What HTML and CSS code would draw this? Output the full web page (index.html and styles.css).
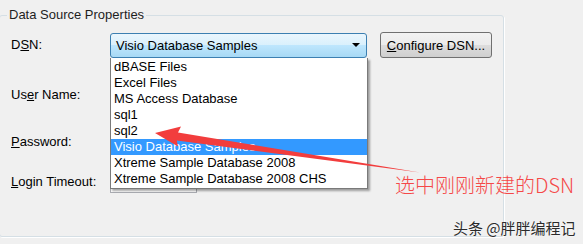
FILE: index.html
```html
<!DOCTYPE html>
<html lang="zh-CN">
<head>
    <meta charset="UTF-8">
    <meta name="viewport" content="width=device-width, initial-scale=1.0">
    <title>Data Source Properties</title>
    <link rel="stylesheet" href="styles.css">
</head>
<body>
    <div class="dialog">
        <fieldset class="group">
            <legend>Data Source Properties</legend>

            <div class="row row-dsn">
                <label class="label">D<u>S</u>N:</label>
                <div class="combo">
                    <span>Visio Database Samples</span>
                    <span class="combo-arrow"></span>
                </div>
                <button class="btn"><u>C</u>onfigure DSN...</button>
            </div>

            <div class="row row-user">
                <label class="label">Us<u>e</u>r Name:</label>
                <div class="textbox"></div>
            </div>

            <div class="row row-pass">
                <label class="label"><u>P</u>assword:</label>
                <div class="textbox"></div>
            </div>

            <div class="row row-timeout">
                <label class="label"><u>L</u>ogin Timeout:</label>
                <div class="textbox textbox-short"></div>
            </div>
        </fieldset>

        <!-- open combo list -->
        <ul class="dropdown">
            <li>dBASE Files</li>
            <li>Excel Files</li>
            <li>MS Access Database</li>
            <li>sql1</li>
            <li>sql2</li>
            <li class="selected">Visio Database Samples</li>
            <li>Xtreme Sample Database 2008</li>
            <li>Xtreme Sample Database 2008 CHS</li>
        </ul>

        <!-- annotation -->
        <svg class="arrow" width="583" height="244" viewBox="0 0 583 244">
            <polygon points="155,133 181,126.5 178,132.4 420,172.5 176.8,140.4 178,146.6" fill="#f23d3d"/>
        </svg>
        <div class="note">选中刚刚新建的DSN</div>
        <div class="watermark">头条 @胖胖编程记</div>
    </div>
</body>
</html>
```

FILE: styles.css
```css
body {
    margin: 0;
    padding: 0;
    background-color: #f0f0f0;
    font-family: "Liberation Sans", Arial, sans-serif;
    font-size: 13px;
    color: #000;
}

.dialog {
    position: relative;
    width: 583px;
    height: 244px;
    overflow: hidden;
}

.group {
    margin: 8px 0 0 -1px;
    padding: 10px 0 0 11px;
    width: 492px;
    height: 217px;
    border: 1px solid #d5dfe5;
    border-radius: 3px;
    box-shadow: 1px 1px 0 #fff;
}

.group legend {
    margin-left: -4px;
    padding: 0 2px;
    line-height: 14px;
    color: #1e1e1e;
}

.row {
    display: flex;
    align-items: center;
}

.label {
    width: 99px;
    flex-shrink: 0;
    line-height: 14px;
}

.row-dsn {
    height: 26px;
}

.row-user {
    margin-top: 26px;
    height: 22px;
}

.row-pass {
    margin-top: 25px;
    height: 22px;
}

.row-timeout {
    margin-top: 18px;
    height: 22px;
}

.combo {
    box-sizing: border-box;
    width: 257px;
    height: 25px;
    padding: 0 6px 0 5px;
    display: flex;
    align-items: center;
    justify-content: space-between;
    border: 1px solid #3c7fb1;
    border-radius: 3px;
    background: linear-gradient(#eaf6fd, #d9f0fc 50%, #bee6fd 50%, #a7d9f5);
}

.combo-arrow {
    width: 0;
    height: 0;
    border-left: 4px solid transparent;
    border-right: 4px solid transparent;
    border-top: 4px solid #000;
}

.btn {
    box-sizing: border-box;
    margin-left: 13px;
    width: 112px;
    height: 26px;
    padding: 0;
    font-family: inherit;
    font-size: 13px;
    color: #000;
    border: 1px solid #707070;
    border-radius: 3px;
    background: linear-gradient(#f2f2f2, #ebebeb 50%, #dddddd 50%, #cfcfcf);
}

.textbox {
    box-sizing: border-box;
    width: 240px;
    height: 22px;
    background: #fff;
    border: 1px solid #abadb3;
}

.textbox-short {
    width: 87px;
}

.dropdown {
    position: absolute;
    left: 110px;
    top: 58px;
    width: 256px;
    margin: 0;
    padding: 1px 0;
    list-style: none;
    background: #fff;
    border: 1px solid #7a7a7a;
    border-top: none;
    box-shadow: 2px 2px 2px rgba(0, 0, 0, 0.35);
}

.dropdown li {
    height: 16px;
    line-height: 16px;
    padding-left: 3px;
    white-space: nowrap;
}

.dropdown li.selected {
    background: #3399ff;
    color: #fff;
}

.arrow {
    position: absolute;
    left: 0;
    top: 0;
}

.note {
    position: absolute;
    left: 395px;
    top: 171px;
    font-family: "Noto Sans CJK SC", sans-serif;
    font-weight: 300;
    font-size: 20px;
    line-height: 28px;
    color: #f54848;
}

.watermark {
    position: absolute;
    left: 453px;
    top: 218px;
    font-family: "Noto Sans CJK SC", sans-serif;
    font-size: 15px;
    line-height: 20px;
    color: #2b2b2b;
    text-shadow: 0 0 2px #fff;
}
```
